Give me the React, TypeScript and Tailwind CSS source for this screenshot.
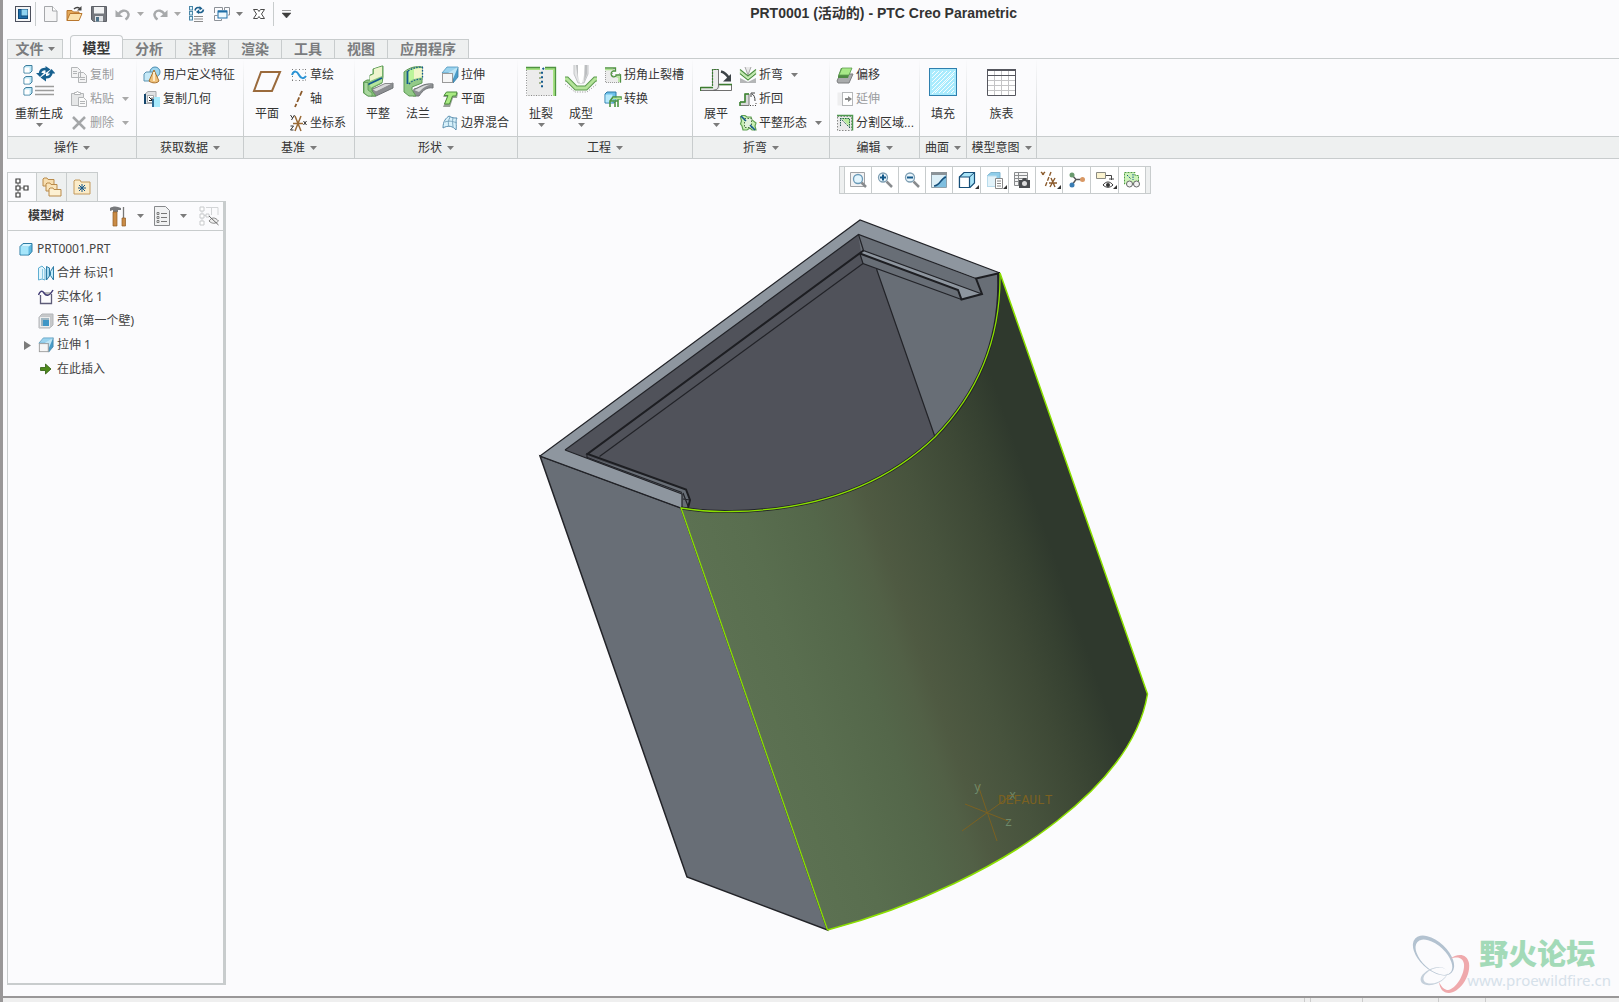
import type { ReactNode } from "react";

type SvgProps = { w?: number; h?: number; children: ReactNode };

function Svg({ w = 18, h = 18, children }: SvgProps) {
  return (
    <svg width={w} height={h} viewBox={`0 0 ${w} ${h}`} fill="none" className="shrink-0" aria-hidden="true">
      {children}
    </svg>
  );
}

function Caret({ dim }: { dim?: boolean }) {
  return (
    <svg width="7" height="4" viewBox="0 0 7 4" className="shrink-0" aria-hidden="true">
      <path d="M0 0h7L3.5 4z" fill={dim ? "#a9a9a9" : "#7b7b7b"} />
    </svg>
  );
}

/* ---------- quick access icons ---------- */

const appIcon = (
  <Svg w={16} h={16}>
    <rect x=".5" y=".5" width="15" height="15" fill="#f4f5f6" stroke="#4b4f5c" />
    <rect x="3" y="3" width="10" height="10" fill="#0f4a7a" />
    <path d="M6.5 3.5h6v6h-6z" fill="#8fd4f2" />
    <path d="M4 4h2v6.5h6V12H4z" fill="#1c6ca8" />
  </Svg>
);

const newIcon = (
  <Svg w={14} h={16}>
    <path d="M.5.5h8L13 5v10.5H.5z" fill="#f5f5f6" stroke="#a5a7aa" />
    <path d="M8.5.5V5H13" fill="#fff" stroke="#a5a7aa" />
  </Svg>
);

const openIcon = (
  <Svg w={17} h={16}>
    <path d="M1 14.500V4.500h5L7.500 6H13v2" fill="#e3a85a" stroke="#b9772e" />
    <path d="M1 14.500 4 7.500h12l-3 7z" fill="#fbe2ae" stroke="#b9772e" />
    <path d="M8 3c2-2 4-2 6-.5" stroke="#444" strokeWidth="1.5" />
    <path d="M15.500 0v4.500H11z" fill="#444" />
  </Svg>
);

const saveIcon = (
  <Svg w={16} h={16}>
    <path d="M.5.5h15v15h-13l-2-2z" fill="#75787e" stroke="#5d6067" />
    <rect x="3" y="1" width="10" height="6.5" fill="#f2f3f4" />
    <rect x="4" y="10" width="8" height="5.5" fill="#e2e5e8" />
    <rect x="5" y="11" width="3" height="4.5" fill="#4d7187" />
  </Svg>
);

const undoIcon = (
  <Svg w={16} h={16}>
    <path d="M3.5 8C6 4.500 10 3.500 12.500 6c2 2.500 1 5.500-2 7.500" stroke="#a7a9ab" strokeWidth="2.400" />
    <path d="M.5 4v7H8z" fill="#a7a9ab" />
  </Svg>
);

const redoIcon = (
  <Svg w={16} h={16}>
    <path d="M12.500 8C10 4.500 6 3.500 3.500 6c-2 2.500-1 5.500 2 7.500" stroke="#a7a9ab" strokeWidth="2.400" />
    <path d="M15.500 4v7H8z" fill="#a7a9ab" />
  </Svg>
);

const regenSmallIcon = (
  <Svg w={16} h={16}>
    {[1, 6, 11].map((y) => (
      <rect key={y} x=".5" y={y - 0.5} width="3" height="3.5" fill="#dff3fb" stroke="#4b87a8" />
    ))}
    <path d="M6 4.500C6.500 1.500 9 1 11 2" stroke="#1b5f8c" strokeWidth="1.6" />
    <path d="M10.500 0v4.500l3-2z" fill="#1b5f8c" />
    <path d="M14.500 3.500c-.5 3-3 3.500-5 2.500" stroke="#1b5f8c" strokeWidth="1.6" />
    <path d="M10 3.500V8L7 6z" fill="#1b5f8c" />
    <path d="M5 10.500h9M5 13h9M5 15.500h9" stroke="#8a8a8a" />
  </Svg>
);

const windowsIcon = (
  <Svg w={17} h={16}>
    <path d="M1.500 7V1.500h8V4M11.500 4V1.500h5V9H15M1.500 14.500v-5h3M1.500 14.500h7V13" stroke="#8c9197" />
    <rect x="5" y="5" width="9" height="7" fill="#eef9fe" stroke="#1e6ea7" />
    <path d="M5 5.500h9" stroke="#1e6ea7" strokeWidth="2" />
  </Svg>
);

const closeIcon = (
  <Svg w={12} h={12}>
    <path d="M.5 1.500h4L6 3.500l1.500-2h4L8.500 6l3 4.500h-4L6 8.500l-1.500 2h-4L3.500 6z" fill="#fff" stroke="#4a4a4a" />
  </Svg>
);

/* ---------- ribbon, large ---------- */

function Cube({ y }: { y: number }) {
  return (
    <g>
      <path d={`M1 ${y + 2}l2-1.5h6v5.500l-2 2H1z`} fill="#bfe8f7" stroke="#3c7d9c" />
      <rect x="1.500" y={y + 2.5} width="5" height="5" fill="#fff" />
    </g>
  );
}

const regenIcon = (
  <Svg w={32} h={32}>
    <Cube y={0} />
    <Cube y={11} />
    <Cube y={22} />
    <path d="M17 9c0-4 3.500-6 7.500-4.500" stroke="#17608f" strokeWidth="2.500" />
    <path d="M22.500 1v7l5-3.500z" fill="#17608f" />
    <path d="M28.500 7c0 4-3 6-7 5" stroke="#17608f" strokeWidth="2.500" />
    <path d="M23 8.500v8l-5.500-4zM13 8h8l-4 4zM24.500 8.500h8l-4-4.500z" fill="#17608f" />
    <path d="M12 21.500h19M12 25.500h19M12 29.500h19" stroke="#9c9c9c" strokeWidth="1.500" />
  </Svg>
);

const planeIcon = (
  <Svg w={32} h={32}>
    <path d="M10 7h19l-8 19H3z" stroke="#9a6a3c" strokeWidth="2" />
  </Svg>
);

const flatIcon = (
  <Svg w={32} h={32}>
    <path d="M10 24 31 18v5l-17 8H9z" fill="#8c8f92" stroke="#6f7275" />
    <path d="M10 24.500 23 18.500h8L14 27z" fill="#d7d8d9" stroke="#88898b" />
    <path d="M1.500 17 5 15h3v-5l3-1V4l9-3h1v11l-1 6-10 5v3l4 5H6l-4.500-3z" fill="#8ac67e" stroke="#5d9a55" />
    <path d="M12 4l8-2.500V11l-12 5v-5l4-2z" fill="#eef5cd" />
    <path d="M7 19l13-6v4L9 22.500z" fill="#b4e59b" />
    <path d="M5 20 20 13" stroke="#145a8d" strokeWidth="1.8" />
    <path d="M2 17.500h4V25l4 3v3H6l-4-3z" fill="#a9d79e" stroke="#5d9a55" strokeWidth=".8" />
  </Svg>
);

const flangeIcon = (
  <Svg w={32} h={32}>
    <path d="M12 24c6-1 8-6 19-5v4c-6-1-10 2-14 8h-6z" fill="#8c8f92" stroke="#6f7275" />
    <path d="M12 25c5-1 8-6 19-5.500-7 0-10 4-14 7.500z" fill="#dcdddd" />
    <path d="M2 7C8 2 14 1 20 2v16L10 22v3l4 6H7l-5-4z" fill="#93ca88" stroke="#5d9a55" />
    <path d="M6 6.500C11 3 15 3 20 3v10c-6-1-10 1-14 5z" fill="#bbf49a" />
    <path d="M12 4l8-1v9l-8 2z" fill="#f0f6c8" />
    <path d="M6 6c5-3 9-4 15-4M7 19c4-4 8-5 14-5M20.500 2v12" stroke="#145a8d" strokeWidth="1.3" strokeDasharray="1.5 1.5" />
    <path d="M5.500 6v13" stroke="#145a8d" strokeWidth="1.8" />
  </Svg>
);

const ripIcon = (
  <Svg w={32} h={32}>
    <path d="M2 4h27v27H2z" fill="#ececec" />
    <path d="M1 2h14v3H1zM20 2h11v29h-3V5h-8z" fill="#a6e183" />
    <path d="M1 2.500h14M20 2.500h10.500V31" stroke="#4e9440" strokeWidth="1.3" />
    <path d="M1.500 5v25.500h27" stroke="#8b8b8b" strokeDasharray="1 1.5" />
    <path d="M15 7v14" stroke="#a5b58f" strokeWidth="2" strokeDasharray="2 3" />
    <path d="M19 3l-2 2v18" stroke="#145a8d" strokeWidth="2" strokeDasharray="2 2.5" />
  </Svg>
);

const formIcon = (
  <Svg w={34} h={32}>
    <path d="M10 0v9l4 9h6l4-9V0" fill="#e5e6e7" stroke="#c3c5c7" />
    <path d="M14 0v10l2 8h2l2-8V0z" fill="#fff" />
    <path d="M12 0h2v14zM21 0h2v9l-3 8z" fill="#bcbec0" />
    <path d="M1 14h2l9 9h10l9-9h2" stroke="#5c9a4e" strokeWidth="5" />
    <path d="M1 14h2l9 9h10l9-9h2" stroke="#b4e49a" strokeWidth="3" />
    <path d="M1 19l10 8h12l10-8" stroke="#777" strokeWidth=".8" strokeDasharray="1 1.5" />
  </Svg>
);

const unbendIcon = (
  <Svg w={32} h={32}>
    <path d="M.5 22.500h14l4-3h13v6H.5z" fill="#e2e3e3" stroke="#6f6f6f" />
    <path d="M20 21h11v4H17c2 0 3-2 3-4z" fill="#fff" />
    <path d="M.5 22.500h13M19 19.500h13M.5 22v4" stroke="#3c7d2f" strokeWidth="1.3" />
    <path d="M12.500 20V4.500h6V20c0 3-1 5-5 5" fill="#ececec" stroke="#555" strokeWidth=".8" />
    <path d="M12.500 21V4.500h6" stroke="#3b7f31" strokeWidth="1.2" strokeDasharray="2 1" />
    <path d="M21 6.500c4 1 6 3 8 7" stroke="#3c4347" strokeWidth="2.5" />
    <path d="M31 9v7.500h-8z" fill="#3c4347" />
  </Svg>
);

const fillIcon = (
  <Svg w={32} h={32}>
    <rect x="2.500" y="3.500" width="27" height="27" fill="#a9ebfd" stroke="#2e7fae" />
    <g stroke="#fff" strokeWidth=".9">
      {[0, 1, 2, 3, 4, 5].map((i) => (
        <path key={i} d={`M5 ${9 + i * 4}L${8 + i * 4} 6M${8 + i * 4} 28L27 ${9 + i * 4}`} />
      ))}
    </g>
  </Svg>
);

const tableIcon = (
  <Svg w={32} h={32}>
    <rect x="1.500" y="4.500" width="28" height="26" fill="#fff" />
    <path d="M8.500 5v25M15.500 5v25M22.500 5v25M2 15.500h27M2 20.500h27M2 25.500h27" stroke="#c4c4c6" />
    <path d="M1.500 4.500h28v26h-28zM2 10.500h27" stroke="#55565e" />
    <path d="M1 5h29" stroke="#55565e" strokeWidth="2" />
  </Svg>
);

/* ---------- ribbon, small ---------- */

const copyIcon = (
  <Svg>
    <path d="M1.500 1.500h6l3 3v7h-9zM8.500 6.500h5l3 3v7h-8z" fill="#f3f3f4" stroke="#b3b5b7" />
    <path d="M3 5.500h4M3 7.500h4M10 11.500h5M10 13.500h5" stroke="#b3b5b7" />
  </Svg>
);

const pasteIcon = (
  <Svg>
    <path d="M1.500 3.500h12v12h-12z" fill="#e6e7e8" stroke="#b3b5b7" />
    <path d="M4.500 4.500v-2h2l1-1.500 1 1.500h2v2z" fill="#fff" stroke="#b3b5b7" />
    <path d="M8.500 7.500h5l3 3v6h-8z" fill="#fafafa" stroke="#b3b5b7" />
    <path d="M10 11.500h5M10 13.500h5" stroke="#b3b5b7" />
  </Svg>
);

const deleteIcon = (
  <Svg>
    <path d="M3 3l12 12M15 3 3 15" stroke="#a4a6a8" strokeWidth="2.5" />
  </Svg>
);

const udfIcon = (
  <Svg>
    <circle cx="12" cy="6" r="5" fill="#9fd6ef" stroke="#4a8cb0" />
    <path d="M1 8l2-2h8v7l-2 2H1z" fill="#c6e9f7" stroke="#5b93b1" />
    <path d="M11 4l5 11c-2 2.500-7 2.500-10 0z" fill="#f0c27c" stroke="#a8722f" />
    <path d="M11 6v9" stroke="#fdebc8" strokeWidth="2" />
  </Svg>
);

const copyGeomIcon = (
  <Svg>
    <path d="M2 4l3-2.500h8v9l-3 3H2z" fill="#dfe1e3" stroke="#a5a8ab" />
    <path d="M1 4h2v10H1z" fill="#14466d" />
    <path d="M4.500 5.500h6v7h-6z" fill="#fff" stroke="#a5a8ab" />
    <path d="M6 7l3 3M9 7.500v3H6" stroke="#222" />
    <path d="M11 7h6v10h-6z" fill="#a8ebfd" />
    <path d="M9 9h2v8H9z" fill="#2f6c96" />
  </Svg>
);

const sketchIcon = (
  <Svg>
    <path d="M2 3.500h14M2 14.500h14M2.500 3v12M15.500 3v12" stroke="#777" strokeDasharray="1 2.5" />
    <path d="M2 9c2-5 5-4 7 0s5 4 7 1" stroke="#2a93d5" strokeWidth="2" />
  </Svg>
);

const axisIcon = (
  <Svg>
    <path d="M12 1 5 17" stroke="#8b5a2b" strokeWidth="1.8" strokeDasharray="5 2" />
  </Svg>
);

const csysIcon = (
  <Svg>
    <path d="M5 2l6 15M11 2 5 17M3 9.500h10" stroke="#9a6a35" strokeWidth="1.5" />
    <path d="M.5 1l2 3M4.500 1l-3 5M.5 12h3l-3 4h3M13.500 7l3 4M16.500 7l-3 4" stroke="#333" />
  </Svg>
);

const extrudePaths = (
  <>
    <path d="M1 7l5-6h11l-5 6z" fill="#9bd3ee" stroke="#4d96bb" strokeWidth=".8" />
    <path d="M12 7l5-6v10l-5 6z" fill="#4a9cc8" stroke="#3b7fa5" strokeWidth=".8" />
    <path d="M7 7l10-6-5 12V7z" fill="#bfe6f6" />
    <rect x="1.500" y="7.500" width="10" height="9" fill="#f6f6f6" stroke="#999" />
  </>
);

const extrudeIcon = <Svg>{extrudePaths}</Svg>;

const planarIcon = (
  <Svg>
    <path d="M2 7l3-4h12l-1 5h-4l-3 9H2l4-10z" fill="#9aa19a" />
    <path d="M3 5.500 5.500 2H16l-1 4h-3.500l-3 8H3.500l3.500-8.500z" fill="#a9ea82" stroke="#4d8e3e" />
  </Svg>
);

const blendIcon = (
  <Svg>
    <path d="M2 14C2 7 5 4 8 2c3 2 5 2 8 2-2 4 0 6-1 12-3-4-8-5-13-2z" fill="#d8f1fb" stroke="#5a8fb0" />
    <path d="M4 8c5-2 9 0 12 1M9 3C7 7 7 10 8 13M12 4c-1 4 0 6 0 9" stroke="#7aa5be" />
  </Svg>
);

const reliefIcon = (
  <Svg>
    <path d="M1.500 2.500h9c-2 3-4 8 1 8 3 0 2-3 5-3v9h-15z" fill="#ececec" stroke="#999" strokeDasharray="1 1" />
    <path d="M1 2h10.500v3H9c-4 2-1 8 3 5V9h4.500v7.500" stroke="#4f9440" strokeWidth="1.3" />
    <path d="M1 3.500h8M12.500 11H15v5" stroke="#aee492" strokeWidth="1.5" />
  </Svg>
);

const convertIcon = (
  <Svg>
    <path d="M1 4l2-2h9v9l-2 2H1z" fill="#6cc0ea" stroke="#2d7ba8" />
    <path d="M1.500 4.500h7v8h-7z" fill="#b7e9fb" />
    <path d="M6 17v-6l3-4h8v2h-3v8M11 17v-5M6 11h8" stroke="#4d9440" strokeWidth="1.6" />
    <path d="M9 8.500h8" stroke="#b4e897" strokeWidth="1.5" />
  </Svg>
);

const bendIcon = (
  <Svg>
    <path d="M1 17v-5l8 4 8-4v5z" fill="#b4b6b7" />
    <path d="M6 1l3 8 3-8" fill="#e8e8e8" stroke="#a8a8a8" />
    <path d="M1 7.500 9 14l8-6.500" stroke="#4c8f3f" strokeWidth="1.3" />
    <path d="M1 5.500 9 12l8-6.500" stroke="#c1e9ad" strokeWidth="2" />
    <path d="M1 3.500 9 10l8-6.500" stroke="#4c8f3f" strokeWidth="1.2" />
  </Svg>
);

const bendBackIcon = (
  <Svg>
    <path d="M1 15.500V12h5V4h4v11.500z" fill="#d9dadb" stroke="#7a7a7a" />
    <path d="M1 12h5V4h4M1 12v4" stroke="#3f8a33" strokeWidth="1.5" />
    <path d="M11 15.500h6v-4" stroke="#444" strokeDasharray="1 1.5" />
    <path d="M16 11c0-4-1-6-3-7M12 7V3h4" stroke="#444" />
  </Svg>
);

const flatPatternIcon = (
  <Svg>
    <path d="M3 1.500h3L8 3h4l1 3 4 3-1 3 1 4h-4l-2-2-3 2H4l-1-4-1.500-2 1-3L1.500 3z" fill="#c8efb3" stroke="#5fa052" strokeWidth="1.2" />
    <path d="M5.500 4.500h7v9h-7z" fill="#e2f2dc" stroke="#4c7344" strokeDasharray="1.5 1.5" />
    <path d="M2 2l5 5M11 11l5 5" stroke="#145a8d" strokeWidth="1.6" />
  </Svg>
);

const offsetIcon = (
  <Svg>
    <path d="M1 15 4 8h13l-4 9H2z" fill="#a9abac" stroke="#7b7d7f" />
    <path d="M2 10 5 2h11l-3 7-1 3H2z" fill="#4f8a43" />
    <path d="M3 9 6 2h10l-3 7z" fill="#a8e988" stroke="#5fa052" strokeWidth=".8" />
  </Svg>
);

const extendIcon = (
  <Svg>
    <rect x="1.500" y="2.500" width="5" height="13" fill="#eeeeef" />
    <rect x="6.500" y="2.500" width="10" height="13" fill="#fff" stroke="#b5b7b9" />
    <path d="M9 9h4" stroke="#888" strokeWidth="2" />
    <path d="M12 6l4 3-4 3z" fill="#888" />
  </Svg>
);

const splitIcon = (
  <Svg>
    <path d="M1.500 2.500h14v14h-14z" fill="#eaeaea" stroke="#888" strokeDasharray="1.5 1.5" />
    <path d="M5 4h9v9z" fill="#b7ea9c" />
    <path d="M1 1.500h15.500v15" stroke="#4f9a50" strokeWidth="1.5" />
    <path d="M4 4l9 9M4.500 12V5M13.500 14V4.500H4" stroke="#285f52" strokeDasharray="1.5 1" />
  </Svg>
);

/* ---------- graphics toolbar ---------- */

const lens = (
  <>
    <circle cx="7" cy="6.500" r="4.5" fill="#eaf6fc" stroke="#7f9fb3" strokeWidth="1.3" />
    <path d="M10.500 10.500 16 16" stroke="#888b8e" strokeWidth="2.5" />
  </>
);

const viewCommands: { label: string; icon: ReactNode; more?: boolean; wide?: boolean }[] = [
  {
    label: "重新调整",
    icon: (
      <Svg>
        <path d="M1.500 1.500h14v14h-14z" fill="#f2f2f3" stroke="#a0a2a5" />
        <circle cx="9" cy="8" r="4.5" fill="#e3f5fd" stroke="#6a9ab8" strokeWidth="1.3" />
        <path d="M12.500 11.500 17 16" stroke="#888b8e" strokeWidth="2.5" />
      </Svg>
    ),
  },
  { label: "放大", icon: <Svg>{lens}<path d="M4 6.500h6M7 3.500v6" stroke="#14598a" strokeWidth="2" /></Svg> },
  { label: "缩小", icon: <Svg>{lens}<path d="M4 6.500h6" stroke="#14598a" strokeWidth="2" /></Svg> },
  {
    label: "重画",
    icon: (
      <Svg>
        <path d="M1.500 1.500h15v15h-15z" fill="#dceff7" stroke="#8fa1ac" />
        <path d="M1 1h16v3H1z" fill="#8b9398" />
        <path d="M16 4v12H4c5-1 6-8 12-12z" fill="#7fbfe0" />
        <path d="M4 15c6 0 7-8 12-9" stroke="#17507c" strokeWidth="1.5" />
      </Svg>
    ),
  },
  {
    label: "显示样式",
    more: true,
    wide: true,
    icon: (
      <Svg>
        <path d="M1.500 6 6 1.500h10.500V12L12 16.500H1.500z" fill="#a9e4f8" stroke="#174f79" strokeWidth="1.2" />
        <path d="M1.500 6h10v10.500h-10z" fill="#fff" stroke="#174f79" strokeWidth="1.2" />
        <path d="M11.500 6l5-4.500" stroke="#174f79" />
      </Svg>
    ),
  },
  {
    label: "已保存方向",
    more: true,
    wide: true,
    icon: (
      <Svg>
        <path d="M1.500 4.500 5 1.500h9V12l-3 3.500H1.500z" fill="#8fcdea" stroke="#7fb5d0" />
        <path d="M1.500 5h9v10.500h-9z" fill="#e3f3fa" stroke="#b9dcec" />
        <path d="M9.500 7.500h7v10h-7z" fill="#fff" stroke="#888" />
        <path d="M11 10h4M11 12.500h4M11 15h4" stroke="#888" />
      </Svg>
    ),
  },
  {
    label: "视图管理器",
    icon: (
      <Svg>
        <path d="M1.500 1.500h13v13h-13z" fill="#f5f5f5" stroke="#8a8c8e" />
        <path d="M2 4.500h12M2 7.500h12M2 10.500h5M5.500 2v12" stroke="#8a8c8e" />
        <path d="M6 9h3l1-2h3l1 2h3v8H6z" fill="#4b4d50" />
        <circle cx="11.500" cy="12.500" r="2.5" fill="#ddd" />
      </Svg>
    ),
  },
  {
    label: "基准显示过滤器",
    more: true,
    icon: (
      <Svg>
        <path d="M1 1l4 4M5 1 1 5M11 1 5 16" stroke="#8b5a2b" strokeWidth="1.4" strokeDasharray="4 1.5" />
        <path d="M9 12h8M11 7l4 9M15 7l-5 9" stroke="#8b5a2b" strokeWidth="1.4" />
      </Svg>
    ),
  },
  {
    label: "旋转中心",
    wide: true,
    icon: (
      <Svg>
        <path d="M4 4l4 4.500L4 14M8 8.500h6" stroke="#555" strokeWidth="1.4" />
        <circle cx="4" cy="4" r="2.5" fill="#6a9a6e" />
        <circle cx="4" cy="14" r="2.5" fill="#3a7db4" />
        <circle cx="14.500" cy="8.500" r="2.5" fill="#d99864" />
      </Svg>
    ),
  },
  {
    label: "注释显示",
    more: true,
    wide: true,
    icon: (
      <Svg>
        <path d="M.5 1.500h9v6h-9z" fill="#fbf3cf" stroke="#8b8b82" />
        <path d="M10 4.500h5.500V9M13 8h5" stroke="#444" />
        <path d="M7 14c3-4 7-4 10 0-3 3-7 3-10 0z" fill="#fff" stroke="#333" />
        <circle cx="12" cy="14" r="2" fill="#333" />
      </Svg>
    ),
  },
  {
    label: "模型预览",
    icon: (
      <Svg>
        <path d="M1.500 1.500H12v3h3.500V13h-14z" fill="#cdf3b9" stroke="#4f9b43" strokeDasharray="2 1" />
        <path d="M4 4l4 4M10 3v6" stroke="#14598a" strokeDasharray="1.5 1" />
        <circle cx="6.500" cy="13" r="3" fill="#f2f2f2" stroke="#666" />
        <circle cx="13.500" cy="13" r="3" fill="#f2f2f2" stroke="#666" />
      </Svg>
    ),
  },
];

/* ---------- title bar ---------- */

function QuickAccess() {
  return (
    <div className="flex h-full flex-1 items-center pl-3">
      <button type="button" aria-label="Creo">{appIcon}</button>
      <span className="mr-2 ml-1 h-6 w-px bg-[#c8cccd]" />
      <div className="flex items-center gap-2">
        <button type="button" aria-label="新建">{newIcon}</button>
        <button type="button" aria-label="打开">{openIcon}</button>
        <button type="button" aria-label="保存">{saveIcon}</button>
        <button type="button" aria-label="撤消" className="flex items-center gap-1.5">{undoIcon}<Caret dim /></button>
        <button type="button" aria-label="重做" className="flex items-center gap-1.5">{redoIcon}<Caret dim /></button>
        <button type="button" aria-label="重新生成">{regenSmallIcon}</button>
        <button type="button" aria-label="窗口" className="flex items-center gap-1.5">{windowsIcon}<Caret /></button>
        <button type="button" aria-label="关闭" className="ml-0.5">{closeIcon}</button>
      </div>
      <span className="mx-2 h-6 w-px bg-[#c8cccd]" />
      <button type="button" aria-label="自定义快速访问工具栏">
        <svg width="9" height="8" viewBox="0 0 9 8"><path d="M0 .5h9M0 3h9L4.500 8z" fill="#3d3d3d" stroke="#3d3d3d" strokeWidth=".5" /></svg>
      </button>
    </div>
  );
}

function TitleBar() {
  return (
    <header className="flex h-[27px] items-center">
      <QuickAccess />
      <h1 className="font-['Liberation_Sans','Noto_Sans_CJK_SC',sans-serif] text-[14px] font-bold text-[#333]">
        PRT0001 (活动的) - PTC Creo Parametric
      </h1>
      <div className="mr-[150px] max-w-[452px] flex-1" />
    </header>
  );
}

/* ---------- ribbon ---------- */

const tabs = ["分析", "注释", "渲染", "工具", "视图", "应用程序"];

function RibbonTabs() {
  return (
    <nav className="mt-2 ml-1 flex h-[23px] items-end text-[14px] leading-[18px] font-bold text-[#7a7c7e]">
      <button type="button" className="flex h-[19px] w-14 items-center justify-center gap-1 border border-b-0 border-[#c8cccd] bg-[#eef0f0]">
        文件
        <Caret />
      </button>
      <button type="button" className="-mb-px ml-[7px] flex h-6 w-[53px] items-center justify-center rounded-t-sm border border-b-0 border-[#c8cccd] bg-[#fbfbfd] text-[#3a3a3a]">
        模型
      </button>
      {tabs.map((t) => (
        <button
          key={t}
          type="button"
          className="flex h-[19px] min-w-[53px] items-center justify-center border-t border-r border-[#c8cccd] bg-[#eef0f0] px-3"
        >
          {t}
        </button>
      ))}
    </nav>
  );
}

type BigProps = { icon: ReactNode; label: string; menu?: boolean; wide?: boolean };

function BigButton({ icon, label, menu, wide }: BigProps) {
  return (
    <button type="button" className={wide ? "flex w-14 flex-col items-center pt-1.5" : "flex w-10 flex-col items-center pt-1.5"}>
      {icon}
      <span className="mt-2 leading-[18px] whitespace-nowrap">{label}</span>
      {menu && <Caret />}
    </button>
  );
}

type SmallProps = { icon: ReactNode; label: string; menu?: boolean; off?: boolean };

function SmallButton({ icon, label, menu, off }: SmallProps) {
  return (
    <button
      type="button"
      disabled={off}
      className={off ? "flex h-6 items-center gap-0.5 whitespace-nowrap text-[#9a9c9e]" : "flex h-6 items-center gap-0.5 whitespace-nowrap"}
    >
      {icon}
      <span>{label}</span>
      {menu && <span className="ml-1.5"><Caret dim={off} /></span>}
    </button>
  );
}

function Column({ children }: { children: ReactNode }) {
  return <div className="flex flex-col items-start pt-1 pl-[3px]">{children}</div>;
}

function Group({ title, width, center, children }: { title: string; width: string; center?: boolean; children: ReactNode }) {
  return (
    <section className={`flex shrink-0 flex-col ${width}`} aria-label={title}>
      <div className="flex h-[77px]">
        <div className={center ? "flex flex-1 justify-center" : "flex flex-1 pl-[3px]"}>{children}</div>
        <span className="w-px bg-linear-to-b from-[#fbfbfd] to-[#c8cccd]" />
      </div>
      <button type="button" className="flex h-[23px] items-center justify-center gap-[5px] border-y border-r border-[#c8cccd] bg-[#eef0f0] whitespace-nowrap">
        {title}
        <Caret />
      </button>
    </section>
  );
}

function Ribbon() {
  return (
    <div className="ml-1 flex border-t border-l border-[#c8cccd] text-[12px] text-[#333]">
      <Group title="操作" width="w-[129px]">
        <BigButton icon={regenIcon} label="重新生成" menu wide />
        <Column>
          <SmallButton icon={copyIcon} label="复制" off />
          <SmallButton icon={pasteIcon} label="粘贴" off menu />
          <SmallButton icon={deleteIcon} label="删除" off menu />
        </Column>
      </Group>
      <Group title="获取数据" width="w-[107px]">
        <Column>
          <SmallButton icon={udfIcon} label="用户定义特征" />
          <SmallButton icon={copyGeomIcon} label="复制几何" />
        </Column>
      </Group>
      <Group title="基准" width="w-[111px]">
        <BigButton icon={planeIcon} label="平面" />
        <Column>
          <SmallButton icon={sketchIcon} label="草绘" />
          <SmallButton icon={axisIcon} label="轴" />
          <SmallButton icon={csysIcon} label="坐标系" />
        </Column>
      </Group>
      <Group title="形状" width="w-[163px]">
        <BigButton icon={flatIcon} label="平整" />
        <BigButton icon={flangeIcon} label="法兰" />
        <Column>
          <SmallButton icon={extrudeIcon} label="拉伸" />
          <SmallButton icon={planarIcon} label="平面" />
          <SmallButton icon={blendIcon} label="边界混合" />
        </Column>
      </Group>
      <Group title="工程" width="w-[175px]">
        <BigButton icon={ripIcon} label="扯裂" menu />
        <BigButton icon={formIcon} label="成型" menu />
        <Column>
          <SmallButton icon={reliefIcon} label="拐角止裂槽" />
          <SmallButton icon={convertIcon} label="转换" />
        </Column>
      </Group>
      <Group title="折弯" width="w-[137px]">
        <BigButton icon={unbendIcon} label="展平" menu />
        <Column>
          <SmallButton icon={bendIcon} label="折弯" menu />
          <SmallButton icon={bendBackIcon} label="折回" />
          <SmallButton icon={flatPatternIcon} label="平整形态" menu />
        </Column>
      </Group>
      <Group title="编辑" width="w-[90px]">
        <Column>
          <SmallButton icon={offsetIcon} label="偏移" />
          <SmallButton icon={extendIcon} label="延伸" off />
          <SmallButton icon={splitIcon} label="分割区域..." />
        </Column>
      </Group>
      <Group title="曲面" width="w-[47px]">
        <BigButton icon={fillIcon} label="填充" />
      </Group>
      <Group title="模型意图" width="w-[70px]" center>
        <BigButton icon={tableIcon} label="族表" />
      </Group>
      <div className="flex flex-1 flex-col">
        <div className="h-[77px]" />
        <div className="h-[23px] border-y border-[#c8cccd] bg-[#eef0f0]" />
      </div>
    </div>
  );
}

/* ---------- model tree ---------- */

const partIcon = (
  <Svg w={14} h={14}>
    <path d="M1 4.500 4 1.500h9v8l-3 3.500H1z" fill="#5fb8e0" stroke="#2b7ba3" />
    <path d="M1.500 4.500h8v8h-8z" fill="#a6e6fb" />
    <path d="M2 4.500 4.500 2h8L10 4.500z" fill="#d6f5fe" />
  </Svg>
);

const mergeIcon = (
  <Svg w={16} h={16}>
    <path d="M.5 3 4 1l3 3v11l-3-1-3.500 1z" fill="#e3f6fd" stroke="#5faed2" />
    <path d="M4.500 4v10" stroke="#8cc8e2" />
    <path d="M8.500 1.500V15l3-4V3z" fill="#a5d9ef" stroke="#2f7ca5" />
    <path d="M15.500 1.500l-3 5v4l3 4.500z" fill="#c0ebfb" stroke="#2f7ca5" />
  </Svg>
);

const solidifyIcon = (
  <Svg w={16} h={16}>
    <path d="M2.500 6v8.500h11V5" stroke="#5d5b78" strokeWidth="1.3" />
    <path d="M5 3h8c-1 5-6 5-8 0z" fill="#bbb" />
    <path d="M.5 6C2 2 4 1 6 4s5 4 9-3" stroke="#423d75" strokeWidth="1.5" />
  </Svg>
);

const shellIcon = (
  <Svg w={16} h={16}>
    <path d="M1 4l3-3h11v11l-3 3H1z" fill="#c7c9cb" stroke="#b3b5b8" />
    <rect x="1.500" y="3.500" width="11" height="11" fill="#eceded" stroke="#c3c5c8" />
    <rect x="3" y="5" width="8" height="8" fill="#3f96c6" />
    <path d="M3 5h8v2H5v6H3z" fill="#9fb6c2" />
  </Svg>
);

const insertIcon = (
  <Svg w={16} h={16}>
    <path d="M2.500 6.500h5V3L13 8l-5.500 5V9.500h-5z" fill="#4f8a1c" stroke="#2f5d10" strokeWidth=".8" />
  </Svg>
);

const extrudeNodeIcon = (
  <svg width="16" height="16" viewBox="0 0 18 18" fill="none" aria-hidden="true">
    {extrudePaths}
  </svg>
);

const tree = [
  { icon: mergeIcon, label: "合并 标识1" },
  { icon: solidifyIcon, label: "实体化 1" },
  { icon: shellIcon, label: "壳 1(第一个壁)" },
  { icon: extrudeNodeIcon, label: "拉伸 1", expandable: true },
  { icon: insertIcon, label: "在此插入" },
];

function TreeTabs() {
  return (
    <div className="flex h-[29px] items-stretch">
      <button type="button" aria-label="模型树" className="-mb-px flex w-[30px] items-center justify-center border border-b-0 border-[#c8cccd] bg-[#fbfbfd]">
        <Svg w={14} h={20}>
          <path d="M3 3v14M3 10h6" stroke="#777" />
          <path d="M1 1h4v4H1zM1 8h4v4H1zM1 15h4v4H1zM9 8h4v4H9z" fill="#fff" stroke="#3c3c3c" strokeWidth="1.2" />
        </Svg>
      </button>
      <button type="button" aria-label="文件夹浏览器" className="flex w-[30px] items-center justify-center border-t border-r border-[#c8cccd] bg-[#eef0f0]">
        <Svg w={20} h={20}>
          <path d="M1 9V2l1-1h3l1 1.500h6V9z" fill="#f7deb0" stroke="#b98a4a" />
          <path d="M4 14V7l1-1h3l1 1.500h6V14z" fill="#f9e4bb" stroke="#b98a4a" />
          <path d="M7 19v-7l1-1h3l1 1.500h7V19z" fill="#fdf0d2" stroke="#b98a4a" />
        </Svg>
      </button>
      <button type="button" aria-label="收藏夹" className="flex w-[31px] items-center justify-center border-t border-r border-[#c8cccd] bg-[#eef0f0]">
        <Svg w={18} h={18}>
          <path d="M1 16V3l1-1h5l1 2h9v12z" fill="#fbecc9" stroke="#c49a5c" />
          <path d="M9 6v8M5 10h8M6 7l6 6M12 7l-6 6" stroke="#17588a" />
        </Svg>
      </button>
    </div>
  );
}

function ModelTree() {
  return (
    <aside className="mt-[13px] mb-[11px] ml-1 flex w-[219px] shrink-0 flex-col">
      <TreeTabs />
      <div className="flex flex-1 flex-col border-t border-r-[3px] border-b-2 border-l border-[#c8cccd] text-[12px] text-[#444]">
        <div className="flex h-[29px] items-center border-b border-[#c8cccd] pl-5">
          <h2 className="font-bold text-[#3a3a3a]">模型树</h2>
          <div className="ml-auto flex items-center pr-1">
            <button type="button" aria-label="设置" className="flex items-center gap-2.5">
              <Svg w={18} h={21}>
                <path d="M1 2c3-2 7-2 11 0v2H9v2H4V4L1 5z" fill="#77797c" />
                <path d="M4 6h4v14H4z" fill="#c98b46" stroke="#8f5b22" strokeWidth=".7" />
                <path d="M14.500 1v11" stroke="#777" strokeWidth="1.3" />
                <path d="M13 12h3.500v8H13z" fill="#c98b46" stroke="#8f5b22" strokeWidth=".7" />
              </Svg>
              <Caret />
            </button>
            <button type="button" aria-label="显示" className="ml-2.5 flex items-center gap-2.5">
              <Svg w={16} h={20}>
                <path d="M.5.5h11l4 4v15H.5z" fill="#f1f2f3" stroke="#87898c" />
                <path d="M7 7.500h6M7 11.500h6M7 15.500h6" stroke="#777" />
                <path d="M3 6.500h2v2H3zM3 10.500h2v2H3zM3 14.500h2v2H3z" stroke="#666" strokeWidth=".8" />
              </Svg>
              <Caret />
            </button>
            <button type="button" aria-label="隐藏列" className="ml-3">
              <Svg w={20} h={20}>
                <path d="M3 3v14M3 9.500h5M7 1.500h12V9M12.500 2v7" stroke="#d3d5d7" />
                <path d="M1 1h4v4H1zM1 8h4v4H1zM1 15h4v4H1zM7 8h3v3H7z" fill="#fff" stroke="#c8cacc" />
                <path d="M10 15c3-4 6-4 9.500 0-3 3-6.500 3-9.500 0z" fill="#eee" stroke="#888" />
                <path d="M10 10l9.500 9" stroke="#666" />
              </Svg>
            </button>
          </div>
        </div>
        <ul className="pt-1.5 font-['Noto_Sans','Noto_Sans_CJK_SC',sans-serif]">
          <li className="flex h-6 items-center gap-1 pl-[11px]">
            {partIcon}
            <span>PRT0001.PRT</span>
          </li>
          {tree.map((node) => (
            <li key={node.label} className="flex h-6 items-center pl-4">
              <span className="w-3.5">
                {node.expandable && (
                  <svg width="7" height="9" viewBox="0 0 7 9"><path d="M0 0l7 4.500L0 9z" fill="#7b7b7b" /></svg>
                )}
              </span>
              {node.icon}
              <span className="ml-[3px]">{node.label}</span>
            </li>
          ))}
        </ul>
      </div>
    </aside>
  );
}

/* ---------- graphics area ---------- */

function ViewToolbar() {
  return (
    <div role="toolbar" className="mt-[7px] ml-[613px] flex h-7 w-max border border-[#c8cccd] bg-[#eef0f0] px-1">
      {viewCommands.map((c) => (
        <button
          key={c.label}
          type="button"
          aria-label={c.label}
          className={
            c.wide
              ? "relative flex w-7 items-center justify-center border-r border-[#c8cccd] bg-white"
              : "relative flex w-[27px] items-center justify-center border-r border-[#c8cccd] bg-white first:w-7 first:border-l"
          }
        >
          {c.icon}
          {c.more && (
            <svg width="4" height="4" viewBox="0 0 4 4" className="absolute right-px bottom-1">
              <path d="M4 0v4H0z" fill="#333" />
            </svg>
          )}
        </button>
      ))}
    </div>
  );
}

const topArc = "C1001 335 981 390 935 437C888 482 822 510 732 511.500C714 512 696 510.500 681 508";
const bottomArc = "C1139 745 1098 789 1057 821C1000 866 915 907 827.500 930";

function Part() {
  return (
    <svg width="630" height="730" viewBox="530 210 630 730" fill="none" className="mt-4 ml-[304px]" role="img" aria-label="PRT0001">
      <defs>
        <linearGradient id="skin" gradientUnits="userSpaceOnUse" x1="681" y1="508" x2="1038.500" y2="383.700">
          <stop offset="0" stopColor="#5c7152" />
          <stop offset=".15" stopColor="#596e4f" />
          <stop offset=".32" stopColor="#54674a" />
          <stop offset=".42" stopColor="#526046" />
          <stop offset=".47" stopColor="#4f5a42" />
          <stop offset=".6" stopColor="#47533d" />
          <stop offset=".73" stopColor="#3e4936" />
          <stop offset=".82" stopColor="#364131" />
          <stop offset=".89" stopColor="#2f392d" />
          <stop offset="1" stopColor="#2f392d" />
        </linearGradient>
      </defs>

      {/* side wall */}
      <path d="M540 456 681 508 827.500 930 687 877z" fill="#686e76" stroke="#222328" strokeWidth="1.5" />
      {/* pocket floor */}
      <path d={`M565 450 858 234 981 294 1000 273${topArc}z`} fill="#50525a" />
      {/* right inner wall */}
      <path d="M858 234 976 278 982 294 1000 273C1001 335 981 390 935 437L876.500 269 863 263z" fill="#686e76" />
      <path d="M863.500 250.500 982 294 961.500 299 958 290 860 253.500z" fill="#8e969f" />
      <path d="M860 253.500 958 290 961.500 299 863 263z" fill="#686e76" />
      {/* left lip */}
      <path d="M585 456 686 489 690 500 688 508H682V494z" fill="#686e76" />
      {/* rim */}
      <path d="M860 220 1000 273 976 278 858.500 234.500 565 450 682 494V508L540 456z" fill="#8e969f" />
      <path d="M976 278.500 1000 273 998 300 982 294z" fill="#686e76" />

      <g stroke="#222328" strokeWidth="1.2">
        <path d="M540 456 860 220 1000 273M565 450 858.500 234.500 976 278.500M540 456 681 508M565 450 682 494" />
        <path d="M858.500 234.500 863.500 250.500 982 294M860 254 863 263.500 961.500 299.500M876.500 269 935 437" />
        <path d="M863 263.500 599.500 456.500M587.500 457.500 682 492.500M587 453V458" />
        <path d="M682 494V508M683 493l5 13M683 499l7 1" />
      </g>
      <g stroke="#1d1e22" strokeWidth="2">
        <path d="M863.500 250.500 587.500 454 686 489.500 690 500 688 508" />
        <path d="M860 253.500 958 290 961.500 299.500 982 294 976 278.500 1000 273" />
      </g>

      {/* curved face, highlighted */}
      <path d={`M1000 273${topArc}L827.500 930C915 907 1000 866 1057 821C1098 789 1139 745 1147.500 694z`} fill="url(#skin)" />
      <path d={`M998.500 274${topArc}`} stroke="#222328" strokeWidth="3" />
      <path d={`M1000 273${topArc}L827.500 930`} stroke="#8be000" strokeWidth="1.3" />
      <path d={`M1000 273 1147.500 694${bottomArc}`} stroke="#8be000" strokeWidth="1.5" />

      {/* default csys */}
      <path d="M978 785 997 841M965 804 1008 821M962 831 1013 794" stroke="#7b6122" />
      <g className="font-['Liberation_Mono',monospace]" fontSize="12">
        <text x="974" y="791" fill="#6f8a6a">y</text>
        <text x="1009" y="799" fill="#6f8a6a">x</text>
        <text x="1005" y="826" fill="#6f8a6a">z</text>
        <text x="998" y="804" fill="#7b6122" fontSize="13">DEFAULT</text>
      </g>
    </svg>
  );
}

function Watermark() {
  return (
    <div className="absolute right-2 bottom-0 flex h-[62px] items-start">
      <svg width="62" height="62" viewBox="0 0 62 62" fill="none" fillRule="evenodd" aria-hidden="true">
        <path
          transform="translate(22.500 21.500) rotate(43)"
          d="M-25 0a25 14 0 1 0 50 0a25 14 0 1 0-50 0M-21 1a22.500 12 0 1 0 45 0a22.500 12 0 1 0-45 0"
          fill="#b3c2d0"
        />
        <path
          transform="translate(22 42.500) rotate(-22)"
          d="M-13 0a14 8 0 1 0 28 0a14 8 0 1 0-28 0M-10 0a12.500 7 0 1 0 25 0a12.500 7 0 1 0-25 0"
          fill="#c5d0db"
        />
        <path d="M39 25c7-6 17-6 19 4 2 15-11 30-20 30-6 0-9-4-10-11 3 6 6 8 9 8 8-1 17-16 16-26-1-6-6-8-14-5z" fill="#efa9ac" />
      </svg>
      <div className="-ml-1.5 flex flex-col items-start">
        <span className="ml-3 font-['Noto_Sans_CJK_SC',sans-serif] text-[29px] leading-9 font-black text-[#a3dab8]">野火论坛</span>
        <span className="font-['Noto_Sans',sans-serif] text-[15px] leading-5 text-[#d6e1ea]">www.proewildfire.cn</span>
      </div>
    </div>
  );
}

export default function App() {
  return (
    <div className="flex min-h-screen flex-col overflow-x-hidden border-l-[3px] border-[#999798] bg-[#fbfbfd] font-['Liberation_Sans','Noto_Sans_CJK_SC',sans-serif]">
      <TitleBar />
      <RibbonTabs />
      <Ribbon />
      <div className="relative flex flex-1">
        <ModelTree />
        <main className="flex-1">
          <ViewToolbar />
          <Part />
        </main>
        <Watermark />
      </div>
      <footer className="flex h-1.5 justify-end border-t-2 border-[#999798] bg-[#efefef] pr-[133px]">
        <span className="w-[7px] border-x border-[#ccc]" />
        <span className="w-[52px] border-r border-[#ccc]" />
        <span className="w-[76px] border-r border-[#ccc]" />
        <span className="w-[47px] border-r border-[#ccc]" />
      </footer>
    </div>
  );
}
